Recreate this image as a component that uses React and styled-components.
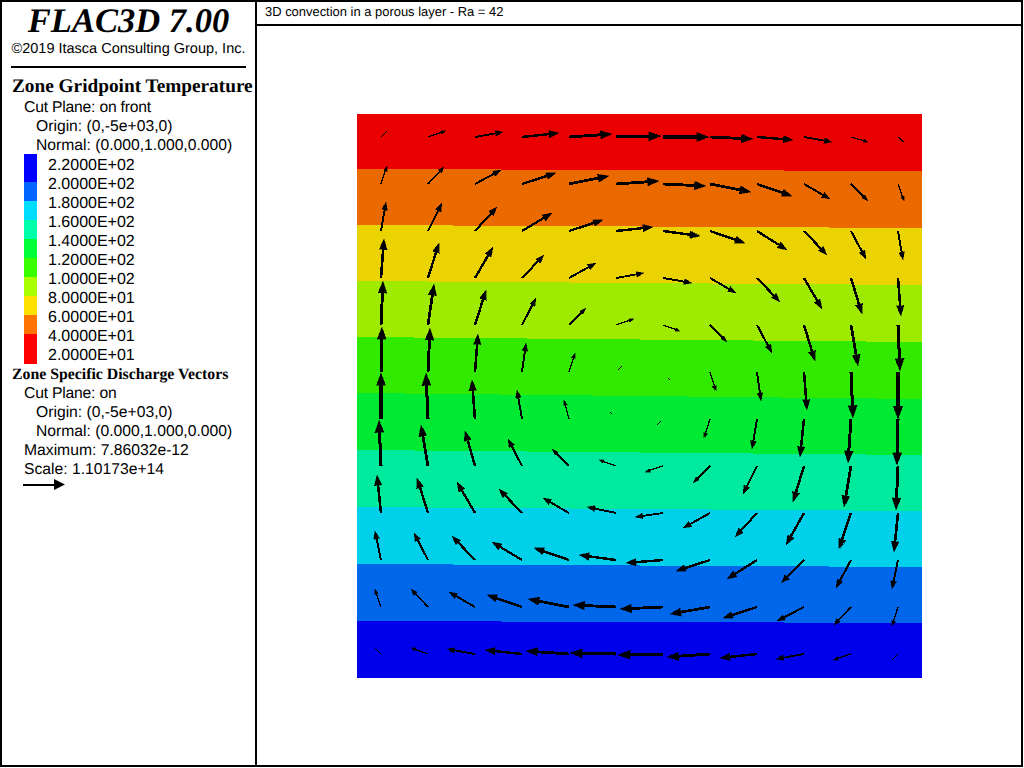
import React from 'react';
import styled, { createGlobalStyle } from 'styled-components';

const GlobalStyle = createGlobalStyle`
  html, body {
    margin: 0;
    padding: 0;
    background: #ffffff;
  }
`;

const Frame = styled.div`
  box-sizing: border-box;
  width: 1023px;
  height: 767px;
  display: flex;
  border: 2px solid #000000;
  color: #000000;
  font-family: "Liberation Sans", Arial, sans-serif;
  text-rendering: geometricPrecision;
  overflow: hidden;
`;

const Sidebar = styled.aside`
  box-sizing: border-box;
  width: 255px;
  flex: none;
  border-right: 2px solid #000000;
  white-space: nowrap;
`;

const TitleBlock = styled.header`
  box-sizing: border-box;
  height: 66px;
  margin: 0 9px;
  border-bottom: 2px solid #000000;
  text-align: center;
`;

const Product = styled.h1`
  margin: 0;
  height: 39px;
  font: italic bold 34.5px/38px "Liberation Serif", "Times New Roman", serif;
`;

const Copyright = styled.div`
  font-size: 14.5px;
  line-height: 16px;
`;

const Heading = styled.h2`
  margin: ${(p) => (p.$small ? '0' : '7px 0 0')};
  padding-left: 10px;
  height: ${(p) => (p.$small ? '19px' : '23px')};
  font-family: "Liberation Serif", "Times New Roman", serif;
  font-weight: bold;
  font-size: ${(p) => (p.$small ? '15.8px' : '19.3px')};
  line-height: ${(p) => (p.$small ? '19px' : '23px')};
`;

const Info = styled.div`
  height: 19px;
  padding-left: ${(p) => (p.$nested ? '34px' : '22px')};
  font-size: 15.7px;
  line-height: 19px;
  letter-spacing: ${(p) => (p.$tight ? '-0.2px' : '0')};
`;

const Legend = styled.div`
  display: flex;
  margin: -1px 0 1px 22px;
`;

const Swatches = styled.div`
  width: 13px;
  height: 210px;
  display: flex;
  flex-direction: column;
`;

const Swatch = styled.div`
  height: ${(p) => p.$height}px;
  background: ${(p) => p.$color};
`;

const Labels = styled.div`
  margin: 1px 0 0 11px;
`;

const Label = styled.div`
  height: 19px;
  font-size: 16px;
  line-height: 21px;
`;

const ScaleArrow = styled.svg`
  display: block;
  margin: 0 0 0 21px;
`;

const Main = styled.main`
  flex: 1;
  min-width: 0;
  display: flex;
  flex-direction: column;
`;

const TitleBar = styled.div`
  box-sizing: border-box;
  height: 24px;
  flex: none;
  padding-left: 8px;
  border-bottom: 2px solid #000000;
  font-size: 12.95px;
  line-height: 19px;
  white-space: nowrap;
`;

const PlotArea = styled.div`
  flex: 1;
  display: flex;
  align-items: center;
  justify-content: center;
`;

const Plot = styled.svg`
  display: block;
  shape-rendering: crispEdges;
`;

const swatches = [
  ['#0000ff', 28],
  ['#0066ff', 19],
  ['#00ddff', 19],
  ['#00ffaa', 19],
  ['#00ff39', 19],
  ['#39ff00', 19],
  ['#aaff00', 19],
  ['#ffe100', 19],
  ['#ff7300', 19],
  ['#ff0000', 30],
];

const labels = [
  '2.2000E+02', '2.0000E+02', '1.8000E+02', '1.6000E+02', '1.4000E+02', '1.2000E+02',
  '1.0000E+02', '8.0000E+01', '6.0000E+01', '4.0000E+01', '2.0000E+01',
];

// plot box in its own coordinates, origin at the page position 357,114
const PLOT_X = 357;
const PLOT_Y = 114;
const PLOT_W = 565;
const PLOT_H = 564;

// left and right y of each band's upper edge, page coordinates
const bands = [
  ['#ea0000', 114, 114],
  ['#ea6a00', 169, 171],
  ['#ead300', 225, 228],
  ['#9eea00', 281, 285],
  ['#31ea00', 337, 342],
  ['#00ea33', 393, 399],
  ['#00ea9e', 450, 455],
  ['#00d0ea', 507, 511],
  ['#0066ea', 564, 567],
  ['#0000ea', 621, 623],
];

// vector offsets per row and column of the sampling grid
const vectors = [
  [[6, -6], [18, -6], [28, -5], [37, -4], [43, -3], [45, -1], [46, 0], [43, 2], [36, 3], [28, 5], [17, 5], [6, 5]],
  [[6, -18], [16, -17], [26, -14], [34, -11], [40, -8], [43, -3], [43, 2], [41, 8], [35, 12], [26, 15], [17, 17], [6, 17]],
  [[5, -29], [14, -28], [22, -24], [30, -18], [34, -11], [37, -4], [37, 5], [35, 12], [30, 19], [23, 24], [15, 28], [5, 29]],
  [[3, -39], [11, -35], [18, -31], [22, -23], [27, -15], [28, -5], [29, 5], [26, 15], [23, 24], [18, 31], [11, 36], [3, 38]],
  [[2, -44], [6, -41], [11, -35], [14, -27], [17, -17], [18, -6], [17, 6], [17, 17], [15, 28], [11, 36], [7, 41], [2, 46]],
  [[1, -45], [2, -44], [3, -38], [4, -29], [6, -19], [4, -4, 2, -2], [2, 2, 5, 6], [6, 19], [4, 29], [3, 38], [2, 46], [0, 47]],
  [[0, -46], [-2, -46], [-3, -39], [-5, -29], [-5, -19], [2, 2, -6, -7], [-4, 4, -2, 2], [-6, 19], [-5, 30], [-4, 38], [-3, 44], [-1, 46]],
  [[-2, -46], [-7, -41], [-10, -35], [-14, -27], [-17, -17], [-17, -6], [-18, 6], [-17, 17], [-14, 28], [-11, 36], [-7, 41], [-2, 44]],
  [[-4, -38], [-11, -35], [-18, -31], [-23, -24], [-26, -15], [-29, -6], [-28, 4], [-27, 15], [-22, 24], [-18, 32], [-12, 36], [-4, 39]],
  [[-6, -29], [-14, -27], [-23, -24], [-30, -18], [-35, -12], [-37, -5], [-37, 3], [-34, 11], [-30, 19], [-23, 23], [-15, 28], [-6, 29]],
  [[-6, -18], [-17, -18], [-26, -15], [-35, -12], [-41, -8], [-43, -2], [-43, 2], [-40, 7], [-34, 11], [-27, 14], [-17, 18], [-6, 19]],
  [[-6, -6], [-17, -6], [-28, -5], [-37, -4], [-43, -3], [-46, -1], [-45, 1], [-43, 3], [-37, 4], [-28, 5], [-18, 6], [-6, 6]],
];

// one vector: a shaft line and a head triangle, both scale with its length.
// very short ones have no visible head, just the line
const Vector = ({ x, y, dx, dy }) => {
  const len = Math.hypot(dx, dy);
  if (len < 10) {
    return <line x1={x} y1={y} x2={x + dx} y2={y + dy} stroke="#000000" strokeWidth="1.4" />;
  }
  const ux = dx / len;
  const uy = dy / len;
  const headLen = len * 0.27;
  const headHalf = len * 0.1;
  const neckX = x + dx - ux * headLen;
  const neckY = y + dy - uy * headLen;
  const sideX = -uy * headHalf;
  const sideY = ux * headHalf;
  const head = [
    [neckX + sideX, neckY + sideY],
    [x + dx, y + dy],
    [neckX - sideX, neckY - sideY],
  ];
  return (
    <g>
      <line
        x1={x}
        y1={y}
        x2={neckX}
        y2={neckY}
        stroke="#000000"
        strokeWidth={Math.max(1, len / 15)}
      />
      <polygon
        fill="#000000"
        stroke="#000000"
        strokeWidth="0.4"
        points={head.map(([a, b]) => `${a.toFixed(1)},${b.toFixed(1)}`).join(' ')}
      />
    </g>
  );
};

const ConvectionPlot = () => (
  <Plot
    width={PLOT_W}
    height={PLOT_H}
    viewBox={`${PLOT_X} ${PLOT_Y} ${PLOT_W} ${PLOT_H}`}
  >
    {bands.map(([color, left, right]) => (
      <polygon
        key={color}
        fill={color}
        points={`357,${left} 922,${right} 922,678 357,678`}
      />
    ))}
    {vectors.map((row, r) =>
      row.map(([dx, dy, ox = 0, oy = 0], c) => (
        <Vector
          key={`${r}-${c}`}
          x={381 + c * 47 + ox}
          y={137 + r * 47 + oy}
          dx={dx}
          dy={dy}
        />
      ))
    )}
  </Plot>
);

const App = () => (
  <>
    <GlobalStyle />
    <Frame>
      <Sidebar>
        <TitleBlock>
          <Product>FLAC3D 7.00</Product>
          <Copyright>©2019 Itasca Consulting Group, Inc.</Copyright>
        </TitleBlock>
        <Heading>Zone Gridpoint Temperature</Heading>
        <Info $tight>Cut Plane: on front</Info>
        <Info $nested>Origin: (0,-5e+03,0)</Info>
        <Info $nested>Normal: (0.000,1.000,0.000)</Info>
        <Legend>
          <Swatches>
            {swatches.map(([color, height]) => (
              <Swatch key={color} $color={color} $height={height} />
            ))}
          </Swatches>
          <Labels>
            {labels.map((label) => (
              <Label key={label}>{label}</Label>
            ))}
          </Labels>
        </Legend>
        <Heading $small>Zone Specific Discharge Vectors</Heading>
        <Info $tight>Cut Plane: on</Info>
        <Info $nested>Origin: (0,-5e+03,0)</Info>
        <Info $nested>Normal: (0.000,1.000,0.000)</Info>
        <Info>Maximum: 7.86032e-12</Info>
        <Info>Scale: 1.10173e+14</Info>
        <ScaleArrow width="42" height="12" viewBox="0 0 42 12">
          <path d="M0 5h31V0l11 5.5L31 11V7H0z" fill="#000000" />
        </ScaleArrow>
      </Sidebar>
      <Main>
        <TitleBar>3D convection in a porous layer - Ra = 42</TitleBar>
        <PlotArea>
          <ConvectionPlot />
        </PlotArea>
      </Main>
    </Frame>
  </>
);

export default App;
